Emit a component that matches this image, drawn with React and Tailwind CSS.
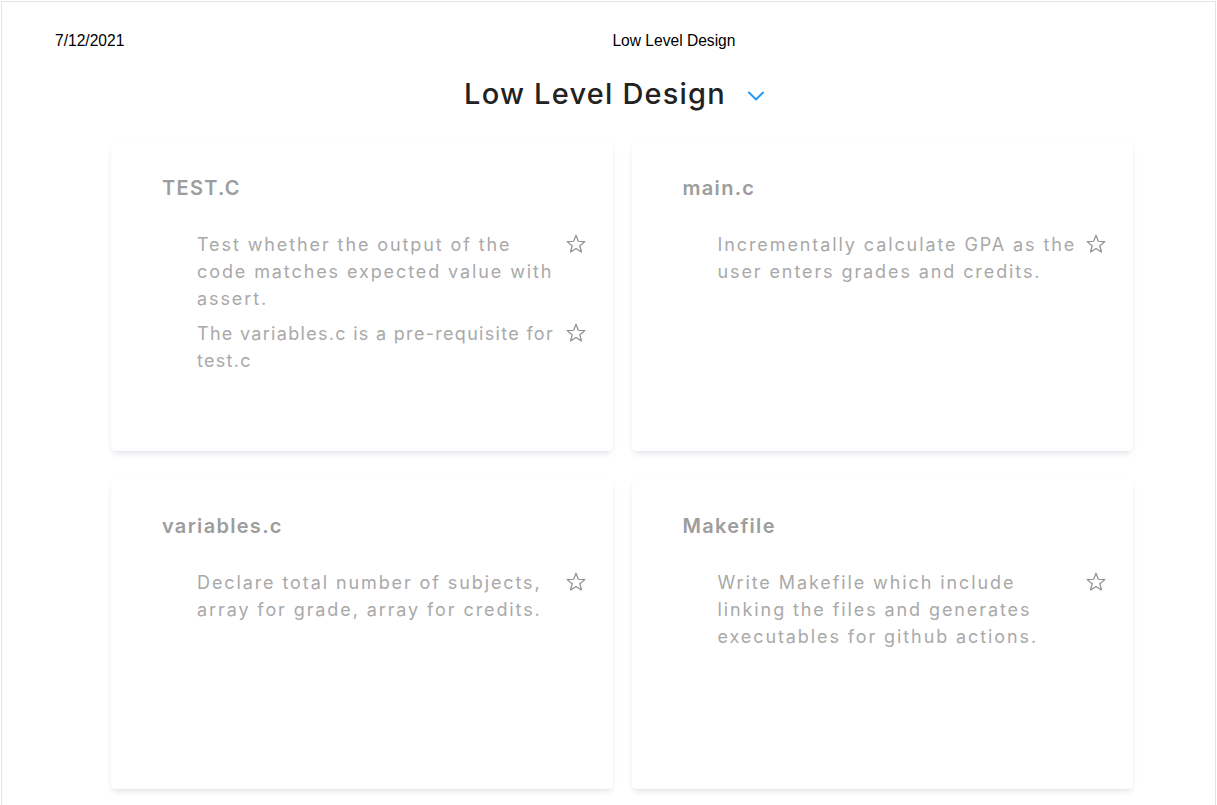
import React from "react";
import { ChevronDown } from "lucide-react";

const cards = [
  {
    title: "TEST.C",
    items: [
      { lines: ["Test whether the output of the", "code matches expected value with", "assert."] },
      { lines: ["The variables.c is a pre-requisite for", "test.c"], tight: true },
    ],
  },
  {
    title: "main.c",
    items: [{ lines: ["Incrementally calculate GPA as the", "user enters grades and credits."] }],
  },
  {
    title: "variables.c",
    items: [{ lines: ["Declare total number of subjects,", "array for grade, array for credits."] }],
  },
  {
    title: "Makefile",
    items: [
      { lines: ["Write Makefile which include", "linking the files and generates", "executables for github actions."] },
    ],
  },
];

// thin outlined star, same as the favourite toggle in the screenshot
const StarOutline = () => (
  <svg width="20" height="20" viewBox="0 0 20 20" className="shrink-0">
    <polygon
      points="10,1.2 12.35,7.26 18.85,7.63 13.8,11.74 15.47,18.02 10,14.5 4.53,18.02 6.2,11.74 1.15,7.63 7.65,7.26"
      fill="none"
      stroke="#8e8e8e"
      strokeWidth="1.2"
      strokeLinejoin="round"
    />
  </svg>
);

const Card = ({ card }) => (
  <div className="h-[309px] bg-white rounded-sm shadow-[0_4px_6px_-2px_rgba(100,116,139,0.2),0_0_2px_rgba(0,0,0,0.05)] pt-[32px] pl-[51px] pr-[27px]">
    <h2 className="text-[20px] leading-[28px] font-semibold text-[#9d9d9d] tracking-[1.3px]">
      {card.title}
    </h2>
    <ul className="mt-[29px] pl-[35px] flex flex-col gap-[8px]">
      {card.items.map((item) => (
        <li key={item.lines[0]} className="flex items-start justify-between">
          <p
            className={`text-[18px] leading-[27px] text-[#a9a9a9] whitespace-nowrap ${
              item.tight ? "tracking-[1.3px]" : "tracking-[1.9px]"
            }`}
          >
            {item.lines.map((line) => (
              <span key={line} className="block">
                {line}
              </span>
            ))}
          </p>
          <span className="mt-[3px]">
            <StarOutline />
          </span>
        </li>
      ))}
    </ul>
  </div>
);

const App = () => {
  return (
    <div
      className="mt-px mx-px h-[804px] bg-white border-t border-x border-[#e4e4e7] overflow-hidden"
      style={{ fontFamily: "Inter, 'Noto Sans', sans-serif" }}
    >
      {/* print header */}
      <div
        className="flex items-center pt-[29px] pl-[53px] text-[15.6px] leading-[20px] text-black"
        style={{ fontFamily: "'Liberation Sans', Arial, sans-serif" }}
      >
        <span>7/12/2021</span>
        <span className="ml-[488px]">Low Level Design</span>
      </div>

      <div className="ml-[109px] w-[1022px]">
        <div className="flex items-center justify-center gap-[16px] pr-[10px] mt-[25px]">
          <h1 className="text-[29px] leading-[36px] font-medium text-[#222222] tracking-[1.2px]">
            Low Level Design
          </h1>
          <ChevronDown size={28} strokeWidth={1.6} className="text-[#2196f3] mt-[3px]" />
        </div>

        <div className="grid grid-cols-2 gap-x-[19px] gap-y-[29px] mt-[30px]">
          {cards.map((card) => (
            <Card key={card.title} card={card} />
          ))}
        </div>
      </div>
    </div>
  );
};

export default App;
